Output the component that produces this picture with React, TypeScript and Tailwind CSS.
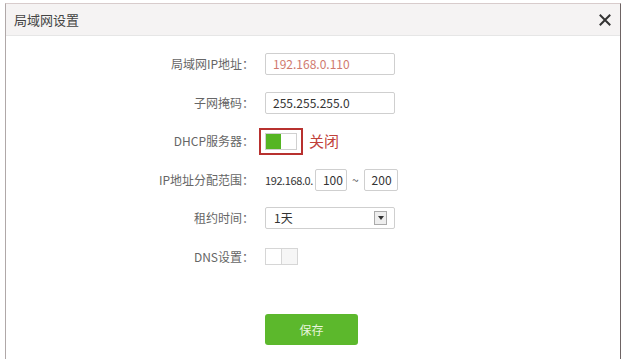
const FONT = { fontFamily: '"Noto Sans CJK SC", "Noto Sans", sans-serif' }

function Row({ label, children }: { label: string; children: React.ReactNode }) {
  return (
    <div className="flex h-[38.5px] items-center">
      <div className="w-[252px] pr-[4px] text-right text-[12px] text-[#666]">{label}</div>
      <div className="ml-[7px] flex items-center">{children}</div>
    </div>
  )
}

function Input({ value, className = '', w = 'w-[130px]' }: { value: string; className?: string; w?: string }) {
  return (
    <div className={`flex h-[22px] ${w} items-center rounded-[2px] border border-[#cfcfcf] bg-white px-[7px] text-[12px] ${className}`}>
      {value}
    </div>
  )
}

export default function App() {
  return (
    <div className="h-[359px] w-[627px] bg-white pl-[5px] pr-[6px] pt-[3px]" style={FONT}>
      <div className="h-[356px] border-x border-t border-l-[#b0a8a8] border-r-[#6e6464] border-t-[#d8cccc] bg-white">
        <div className="flex h-[32px] items-center justify-between border-b border-[#e6e6e6] bg-[#f5f3f3] pl-[8px] pr-[8px]">
          <span className="text-[13px] text-[#444]">局域网设置</span>
          <svg width="12" height="12" viewBox="0 0 12 12" className="mr-[1px]">
            <path d="M1.5 1.5 L10.5 10.5 M10.5 1.5 L1.5 10.5" stroke="#333" strokeWidth="2" strokeLinecap="square" />
          </svg>
        </div>

        <div className="pt-[9px]">
          <Row label="局域网IP地址：">
            <Input value="192.168.0.110" className="text-[#d0796e]" />
          </Row>
          <Row label="子网掩码：">
            <Input value="255.255.255.0" className="text-[#333]" />
          </Row>
          <Row label="DHCP服务器：">
            <div className="-ml-[6px] flex h-[27px] w-[44px] items-center justify-center border-2 border-[#b8312f]">
              <div className="flex h-[17px] w-[32px] border border-[#d0d0d0] bg-white">
                <div className="w-[15px] bg-[#55b523]" />
              </div>
            </div>
            <span className="ml-[6px] text-[15px] text-[#c0413a]">关闭</span>
          </Row>
          <Row label="IP地址分配范围：">
            <span className="text-[11px] tracking-[-0.4px] text-[#333]">192.168.0.</span>
            <Input value="100" w="w-[32px]" className="ml-[2px] px-[5px] text-[#333]" />
            <span className="mx-[5px] text-[12px] text-[#555]">~</span>
            <Input value="200" w="w-[34px]" className="px-[5px] text-[#333]" />
          </Row>
          <Row label="租约时间：">
            <div className="flex h-[22px] w-[130px] items-center justify-between rounded-[2px] border border-[#cfcfcf] bg-white pl-[8px] pr-[7px] text-[12px] text-[#333]">
              <span>1天</span>
              <div className="flex h-[14px] w-[13px] items-center justify-center border border-[#aaa] bg-[#eee]">
                <svg width="6" height="4" viewBox="0 0 6 4">
                  <path d="M0 0 L6 0 L3 4 Z" fill="#333" />
                </svg>
              </div>
            </div>
          </Row>
          <Row label="DNS设置：">
            <div className="flex h-[17px] w-[33px] border border-[#d6d6d6] bg-white">
              <div className="w-[16px] border-r border-[#d6d6d6]" />
              <div className="flex-1 bg-[#f6f6f6]" />
            </div>
          </Row>
        </div>

        <div className="mt-[38px] pl-[259px]">
          <button className="flex h-[31px] w-[93px] items-center justify-center rounded-[3px] bg-[#5cb82c] text-[12px] text-[#e8f5dc]">
            保存
          </button>
        </div>
      </div>
    </div>
  )
}
